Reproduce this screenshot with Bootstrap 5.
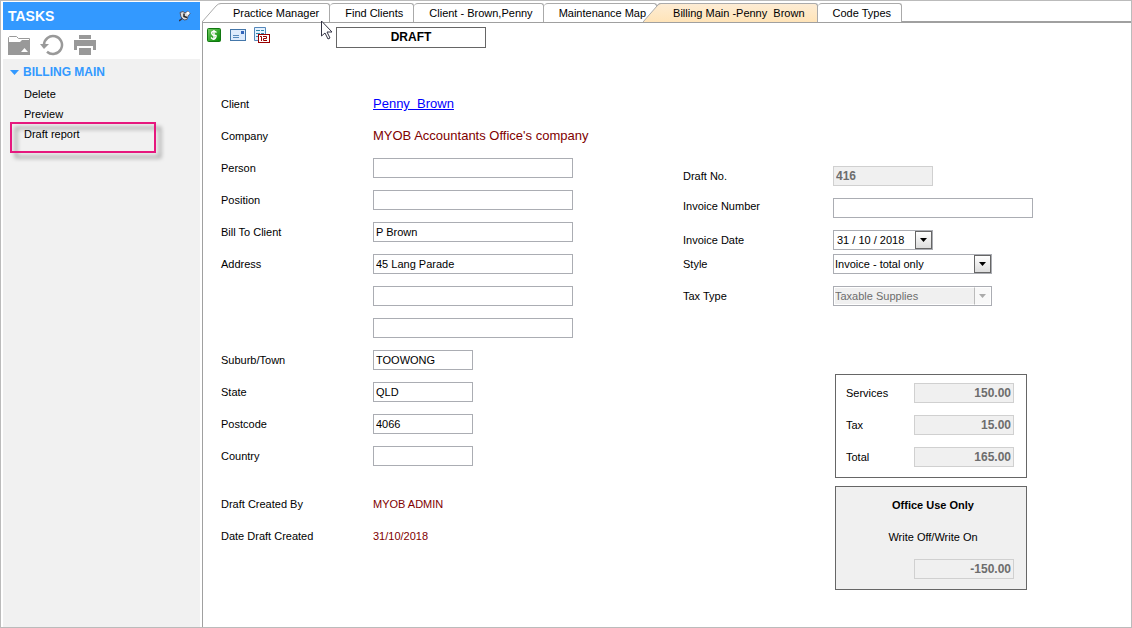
<!DOCTYPE html>
<html lang="en">
<head>
<meta charset="utf-8">
<meta name="viewport" content="width=device-width, initial-scale=1">
<title>Billing Main</title>
<link href="https://cdn.jsdelivr.net/npm/bootstrap@5.3.0/dist/css/bootstrap.min.css" rel="stylesheet">
<style>
body{font:11px/16px "Liberation Sans",Arial,sans-serif;color:#000;background:#fff}
.app-frame{border:1px solid #bbb;min-height:100vh}
.tasks-pane{width:197px;margin:0 2px;padding-top:1px}
.tasks-title{background:#39f;color:#fff;font-size:14px;font-weight:700;height:28px;padding:0 9px 0 5px;margin:0}
.tasks-tools{height:29px;padding:4px 5px 0;gap:9px}
.plain-btn{border:0;background:none;padding:0;color:inherit;line-height:0}
.tasks-list{background:#f1f1f1;padding-top:5px}
.group-btn{color:#39f;font-size:12px;font-weight:700;line-height:16px;padding-left:7px;gap:4px}
.task-link{display:block;position:relative;color:#000;text-decoration:none;line-height:20px;padding-left:21px}
.task-mark{position:absolute;left:7px;top:-2px;width:146px;height:31px;border:2px solid #e6187e;filter:drop-shadow(5px 5px 2px rgba(0,0,0,.4));pointer-events:none}
.tab-strip{height:22px;padding-top:2px;border-bottom:2px solid #a0a0a0}
.tab-btn{position:relative;height:19px;padding:0 10px 0 15px;background:#fff;border:solid #aaa;border-width:1px 1px 0 0;border-radius:4px 3px 0 0;line-height:17px;white-space:pre;color:#000}
.tab-first{margin-left:16px}
.tab-current{background:linear-gradient(#fdecd4,#ffe4b8);padding:0 12px 0 16px}
.tab-slant{position:absolute;left:-14px;top:-1px}
.tab-first .tab-slant{left:-16px}
.work-area{border-left:1px solid #a0a0a0;margin-top:-1px}
.tool-row{height:28px;padding:4px 0 0 4px}
.draft-tag{width:150px;height:21px;border:1px solid #666;font-size:12px;font-weight:700;line-height:19px;margin:1px 0 0 64px}
.form-cols{padding:38px 0 0 18px}
.left-col{width:462px}
.right-col{width:352px;padding-top:72px}
.f-row{display:flex;align-items:center;height:32px}
.f-row>.f-label{width:152px;flex:none}
.right-col .f-row>.f-label{width:150px}
.f-box{width:200px;height:20px;border:1px solid #abadb3;border-radius:0;background:#fff;padding:0 2px;font-size:11px;line-height:18px;color:#000}
.f-half{width:100px}
.f-off{background:#f0f0f0;border-color:#d0d0d0;color:#6d6d6d;font-size:12px;font-weight:700;opacity:1}
.f-big{font-size:13px}
.f-red{color:maroon}
.f-link{color:#00f}
.date-wrap{width:100px;height:20px;border:1px solid #abadb3}
.date-wrap input{width:81px;border:0;padding:0 3px;white-space:pre}
.drop-face{width:17px;height:18px;border:1px solid #666;background:linear-gradient(#fff,#ddd);padding:0;display:flex;align-items:center;justify-content:center}
.style-row{margin-top:-8px}
.pick-wrap{width:159px;height:20px}
.pick-wrap select{appearance:none;width:100%;height:20px;border:1px solid #abadb3;border-radius:0;padding:0 1px;background:#fff;font-size:11px;color:#000;opacity:1}
.pick-wrap .drop-face{position:absolute;right:1px;top:1px;pointer-events:none}
.pick-wrap select:disabled{background:#f0f0f0;color:#6d6d6d;box-shadow:inset 0 0 0 1px #fff}
.pick-off .drop-face{border-color:#fff #fff #fff #bbb;background:#f8f8f8}
.sum-card{width:192px;height:104px;border:1px solid #666;margin:62px 0 0 152px;padding-top:2px}
.sum-card .f-row{padding:0 12px 0 10px;justify-content:space-between}
.right-col .sum-card .f-row>.f-label{width:auto}
.office-card{background:#f0f0f0;margin-top:8px}
.pointer-art{position:absolute;left:320px;top:19px;z-index:5}
</style>
</head>
<body>
<div class="app-frame d-flex position-relative">
  <aside class="tasks-pane d-flex flex-column flex-shrink-0">
    <h1 class="tasks-title d-flex align-items-center justify-content-between">TASKS
      <button class="plain-btn" aria-label="Pin tasks"><svg width="12" height="12"><path d="M0 11 4 8" stroke="#334" stroke-width="1.500"/><path d="M1 2.500 4 1.500l2 1.500 3-2 2 2.500-2 3-1 3-3 .5-3-3z" fill="#ddd" stroke="#556"/><path d="M5 3.500v3l3 1" fill="none" stroke="#222" stroke-width="1.500"/><circle cx="9" cy="3" r="1.500" fill="#fff"/></svg></button>
    </h1>
    <div class="tasks-tools d-flex align-items-start">
      <button class="plain-btn" aria-label="Open folder"><svg width="22" height="22"><path d="M.5 20V3.500l1-1h7l2 2h11V6" fill="none" stroke="#999"/><path d="M3 8h9l2-2h8v15H0V19h3z" fill="#999"/><path d="M0 8h3v13H0z" fill="#999"/><path d="M13 18l3.500-4 3.500 4z" fill="#fff"/></svg></button>
      <button class="plain-btn" aria-label="Refresh"><svg width="26" height="22"><path d="M5 11a9 9 0 1 1 3 6.700" fill="none" stroke="#999" stroke-width="2.500"/><path d="M1 10h9l-5 5z" fill="#999"/></svg></button>
      <button class="plain-btn" aria-label="Print"><svg width="24" height="22"><path d="M5 1h12v4H5zM0 6h22v10h-3v-4H3v4H0zM5 14h12v7H5z" fill="#999"/></svg></button>
    </div>
    <nav class="tasks-list flex-grow-1">
      <button class="plain-btn group-btn d-flex align-items-center"><svg width="9" height="5"><path d="M0 0h9L4.500 5z" fill="#39f"/></svg>BILLING MAIN</button>
      <div class="pt-1">
        <a class="task-link" href="#">Delete</a>
        <a class="task-link" href="#">Preview</a>
        <a class="task-link" href="#">Draft report<span class="task-mark"></span></a>
      </div>
    </nav>
  </aside>
  <main class="flex-grow-1 d-flex flex-column">
    <div class="tab-strip d-flex" role="tablist">
      <button class="tab-btn tab-first" role="tab"><svg class="tab-slant" width="22" height="20"><path d="M0 19 14 3Q16 .5 19 .5H22V19z" fill="#fff"/><path d="M0 19 14 3Q16 .5 19 .5H22" fill="none" stroke="#aaa"/></svg><span class="position-relative">Practice Manager</span></button>
      <button class="tab-btn" role="tab">Find Clients</button>
      <button class="tab-btn" role="tab">Client - Brown,Penny</button>
      <button class="tab-btn" role="tab">Maintenance Map</button>
      <button class="tab-btn tab-current" role="tab" aria-selected="true"><svg class="tab-slant" width="18" height="20"><defs><linearGradient id="warm" x2="0" y2="1"><stop stop-color="#fdecd4"/><stop offset="1" stop-color="#ffe4b8"/></linearGradient></defs><path d="M0 19 14 3Q16 .5 18 .5V19z" fill="url(#warm)"/><path d="M0 19 14 3Q16 .5 18 .5" fill="none" stroke="#aaa"/></svg>Billing Main -Penny  Brown</button>
      <button class="tab-btn" role="tab">Code Types</button>
    </div>
    <div class="work-area flex-grow-1">
      <div class="tool-row d-flex align-items-start">
        <button class="plain-btn" aria-label="Billing"><svg width="14" height="16"><defs><linearGradient id="leaf" x2="1" y2="1"><stop stop-color="#7c6"/><stop offset="1" stop-color="#080"/></linearGradient></defs><rect x=".5" y="2.500" width="13" height="13" rx="1" fill="url(#leaf)" stroke="#171"/><path d="M9.500 6.500Q8 5 6 5.500T5 8t3 1.500T8.500 12 4 11.500M7 4v10" fill="none" stroke="#fff" stroke-width="1.400"/></svg></button>
        <button class="plain-btn ms-2" aria-label="Letter"><svg width="17" height="16"><rect x="1.500" y="3.500" width="15" height="11" fill="#dceafc" stroke="#47a"/><path d="M4 9.500h6M4 11.500h6" stroke="#58b"/><path d="M12 5h3v3h-3z" fill="#36b"/></svg></button>
        <button class="plain-btn ms-2" aria-label="Schedule"><svg width="18" height="18"><path d="M.5 1.500h11v13H.5z" fill="#e4f2ff" stroke="#58b"/><path d="M2 4.500h4m1 0h3M2 7.500h4m1 0h3M2 10.500h2" stroke="#38a"/><rect x="4.500" y="8.500" width="11" height="8" fill="#fff" stroke="#900"/><path d="M6 10.500h1.500V15M9 10.500h3.500v2H9.500v2H13" fill="none" stroke="#900"/></svg></button>
        <div class="draft-tag text-center">DRAFT</div>
      </div>
      <form class="form-cols d-flex">
        <div class="left-col flex-shrink-0">
          <div class="f-row"><span class="f-label">Client</span><a class="f-link f-big" href="#">Penny&nbsp; Brown</a></div>
          <div class="f-row"><span class="f-label">Company</span><span class="f-red f-big">MYOB Accountants Office's company</span></div>
          <div class="f-row"><label class="f-label" for="person">Person</label><input class="f-box" id="person"></div>
          <div class="f-row"><label class="f-label" for="position">Position</label><input class="f-box" id="position"></div>
          <div class="f-row"><label class="f-label" for="billto">Bill To Client</label><input class="f-box" id="billto" value="P Brown"></div>
          <div class="f-row"><label class="f-label" for="addr1">Address</label><input class="f-box" id="addr1" value="45 Lang Parade"></div>
          <div class="f-row"><span class="f-label"></span><input class="f-box" aria-label="Address line 2"></div>
          <div class="f-row"><span class="f-label"></span><input class="f-box" aria-label="Address line 3"></div>
          <div class="f-row"><label class="f-label" for="town">Suburb/Town</label><input class="f-box f-half" id="town" value="TOOWONG"></div>
          <div class="f-row"><label class="f-label" for="state">State</label><input class="f-box f-half" id="state" value="QLD"></div>
          <div class="f-row"><label class="f-label" for="postcode">Postcode</label><input class="f-box f-half" id="postcode" value="4066"></div>
          <div class="f-row"><label class="f-label" for="country">Country</label><input class="f-box f-half" id="country"></div>
          <div class="f-row mt-3"><span class="f-label">Draft Created By</span><span class="f-red">MYOB ADMIN</span></div>
          <div class="f-row"><span class="f-label">Date Draft Created</span><span class="f-red">31/10/2018</span></div>
        </div>
        <div class="right-col flex-shrink-0">
          <div class="f-row"><label class="f-label" for="draftno">Draft No.</label><input class="f-box f-half f-off" id="draftno" value="416" disabled></div>
          <div class="f-row"><label class="f-label pb-1" for="invno">Invoice Number</label><input class="f-box" id="invno"></div>
          <div class="f-row"><label class="f-label" for="invdate">Invoice Date</label><div class="date-wrap d-flex"><input id="invdate" value="31 / 10 / 2018"><button type="button" class="drop-face" aria-label="Open calendar"><svg width="7" height="4"><path d="M0 0h7L3.500 4z"/></svg></button></div></div>
          <div class="f-row style-row"><label class="f-label" for="style">Style</label><div class="pick-wrap position-relative"><select id="style"><option>Invoice - total only</option></select><span class="drop-face"><svg width="7" height="4"><path d="M0 0h7L3.500 4z"/></svg></span></div></div>
          <div class="f-row"><label class="f-label" for="tax">Tax Type</label><div class="pick-wrap pick-off position-relative"><select id="tax" disabled><option>Taxable Supplies</option></select><span class="drop-face"><svg width="7" height="4"><path d="M0 0h7L3.500 4z" fill="#aaa"/></svg></span></div></div>
          <div class="sum-card">
            <div class="f-row"><label class="f-label" for="services">Services</label><input class="f-box f-half f-off text-end" id="services" value="150.00" disabled></div>
            <div class="f-row"><label class="f-label" for="taxsum">Tax</label><input class="f-box f-half f-off text-end" id="taxsum" value="15.00" disabled></div>
            <div class="f-row"><label class="f-label" for="total">Total</label><input class="f-box f-half f-off text-end" id="total" value="165.00" disabled></div>
          </div>
          <div class="sum-card office-card">
            <div class="f-row justify-content-center fw-bold ps-3">Office Use Only</div>
            <div class="f-row justify-content-center ps-3"><label for="writeoff">Write Off/Write On</label></div>
            <div class="f-row justify-content-end"><input class="f-box f-half f-off text-end" id="writeoff" value="-150.00" disabled></div>
          </div>
        </div>
      </form>
    </div>
  </main>
  <svg class="pointer-art" width="14" height="21"><path d="M.5 1v15l3.500-3 3 6 2-1-3-6h5z" fill="#fff" stroke="#334"/></svg>
</div>
<script src="https://cdn.jsdelivr.net/npm/bootstrap@5.3.0/dist/js/bootstrap.bundle.min.js"></script>
</body>
</html>
